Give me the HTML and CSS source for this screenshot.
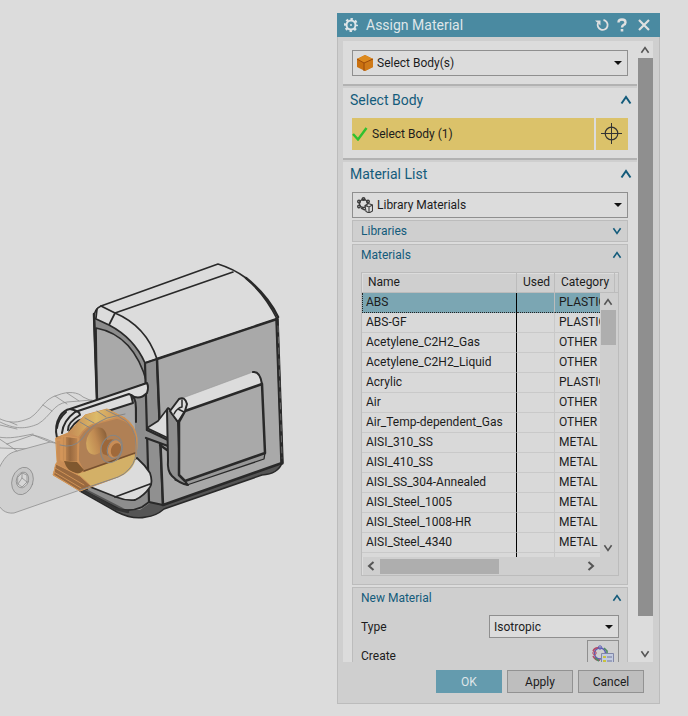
FILE: index.html
```html
<!DOCTYPE html>
<html lang="en">
<head>
<meta charset="utf-8">
<title>Assign Material</title>
<link rel="stylesheet" href="styles.css">
</head>
<body>
<svg class="defs" aria-hidden="true">
  <symbol id="up" viewBox="0 0 12 10"><path d="M1.5 8.5 6 2l4.500 6.500" fill="none" stroke="currentColor" stroke-width="2"/></symbol>
  <symbol id="down" viewBox="0 0 12 10"><path d="M1.500 1.500 6 8l4.500-6.500" fill="none" stroke="currentColor" stroke-width="2"/></symbol>
  <symbol id="caret" viewBox="0 0 8 4"><path d="M0 0h8L4 4z" fill="#111"/></symbol>
</svg>
<main class="app">
  <section class="stage" aria-label="Model view">
    <svg class="model" viewBox="0 0 337 716" preserveAspectRatio="xMinYMin meet">
      <defs>
        <linearGradient id="hole" x1="1" y1="0" x2="0" y2="1"><stop offset="0" stop-color="#76502f"/><stop offset=".5" stop-color="#c08a52"/><stop offset="1" stop-color="#dcb768"/></linearGradient>
        <linearGradient id="rim" x1="0" y1="0" x2="1" y2="0"><stop offset="0" stop-color="#c48a55"/><stop offset=".5" stop-color="#dcba68"/><stop offset="1" stop-color="#c88b55"/></linearGradient>
        <linearGradient id="side" x1="0" y1="0" x2="1" y2="0"><stop offset="0" stop-color="#d09458"/><stop offset=".5" stop-color="#99693f"/><stop offset="1" stop-color="#bd8551"/></linearGradient>
      </defs>
      <g stroke-linejoin="round" stroke-linecap="round">
        <g fill="#d6d6d6" stroke="#8e8e8e" stroke-width=".8">
          <path d="M-2 418C10 424 18 423 30 418C42 410 43 399 58 395C68 391 78 392 83 397L92 401V430L60 450L0 448Z" fill="#dadada"/>
          <path d="M-2 421C15 430 26 429 38 424C51 416 53 404 67 402L92 400M43 405l9 6M55 396l12 8M67 393l12 8M-2 437C10 439 18 437 33 434M0 425l17 4M10 422l7 3" fill="none"/>
          <path d="M-2 470C4 458 8 453 17 451L50 442C60 444 66 446 80 441L88 425L100 480L80 490L14 513C5 514 0 509-3 502Z" fill="#d0d0d0"/>
          <path d="M7 444L33 435C46 438 54 443 64 446C78 448 86 434 94 424M33 435l17 7M7 444l10 7M-2 438l9 6" fill="none"/>
          <ellipse cx="22.500" cy="481" rx="10.500" ry="14" transform="rotate(18 22.500 481)" fill="#c6c6c6"/>
          <ellipse cx="22.500" cy="480" rx="6" ry="8" transform="rotate(18 22.500 480)"/>
          <path d="M18 477l4-4 5 2v7l-5 5-4-3zM22 473v5l-4 6M22 478l5 4" fill="none"/>
        </g>
        <path d="M80 491L117 512Q133 520 146 517Q156 516 164 509L262 475Q278 474 282 463L163 499L100 485Z" fill="#555" stroke="#292929" stroke-width="1.500"/>
        <path d="M94 318Q94 309 101 306L218 264Q234 269 246 278Q266 296 277 319L157 359L145 363Z" fill="#dcdcdc" stroke="#292929" stroke-width="1.600"/>
        <path d="M115 313L233 272M115 313L109 325M97 309l-1 9M101 306l14 7Q146 326 157 359" fill="none" stroke="#292929" stroke-width="1.700"/>
        <path d="M246 278Q268 296 278 317" fill="none" stroke="#292929" stroke-width="2.500"/>
        <path d="M94 318L109 325Q134 338 145 363L148 390L128 400L97 401Z" fill="#8c8c8c" stroke="#292929" stroke-width="1.800"/>
        <path d="M96 328Q134 335 147 383L97 401Z" fill="#a9a9a9" stroke="#292929" stroke-width="1.700"/>
        <path d="M94 314L97 401" stroke="#292929" stroke-width="2.500"/>
        <path d="M133 397L146 385L150 503L140 510L125 509L88 490L90 420Z" fill="#8d8d8d"/>
        <path d="M80 414L134 397L136 465L84 486Z" fill="#aaa"/>
        <path d="M145 363L157 359L163 505L149 502Z" fill="#909090" stroke="#292929" stroke-width="2.200"/>
        <path d="M157 359L277 319L282 463L163 505Z" fill="#a9a9a9" stroke="#292929" stroke-width="2.500"/>
        <path d="M277 319L282 463" stroke="#292929" stroke-width="3.500"/>
        <path d="M278 326L282 458" stroke="#777" stroke-width=".8" stroke-dasharray="6 5"/>
        <path d="M57 438Q54 426 60 416Q64 410 70 409L147 383Q149 387 147 393Q139 401 131 395L133 403L83 419Q73 421 68 435Z" fill="#dcdcdc" stroke="#292929" stroke-width="2"/>
        <path d="M70 409Q80 411 80 415M75 412L129 394Q136 396 136 408V422M62 433Q63 421 75 412M68 430Q67 423 80 415M57 428Q58 419 66 412" fill="none" stroke="#292929" stroke-width="2"/>
        <path d="M137 458Q145 465 150 473Q153 482 150 487Q144 496 135 500Q126 501 116 497L88 486Z" fill="#dcdcdc" stroke="#292929" stroke-width="1.800"/>
        <path d="M115 497L150 484M82 490L119 509Q131 512 142 507L149 502" fill="none" stroke="#292929" stroke-width="1.800"/>
        <path d="M84 491l32 18 12 3" fill="none" stroke="#333" stroke-width="2.500"/>
        <path d="M145 430L168 440V447L145 438Z" fill="#909090"/>
        <path d="M147 428L158 421L168 408V438Z" fill="#dcdcdc" stroke="#292929" stroke-width="1.600"/>
        <path d="M146 438L168 446M147 430L168 440M160 445l7 5" fill="none" stroke="#292929" stroke-width="2.300"/>
        <path d="M180 480L265 453L264 459L187 485L175 480Z" fill="#979797" stroke="#292929" stroke-width="1.300"/>
        <path d="M167 410Q169 406 172 413L178 422L180 475L188 485Q180 484 172 476Q167 471 168 460Z" fill="#8f8f8f" stroke="#292929" stroke-width="2"/>
        <path d="M180 399L253 372Q260 371 262 384L185 411Z" fill="#dcdcdc" stroke="#999" stroke-width=".6"/>
        <path d="M253 372Q260 371 262 384" fill="none" stroke="#292929" stroke-width="2"/>
        <path d="M179 422L185 411L262 384L265 453L185 481L179 475Z" fill="#a9a9a9" stroke="#292929" stroke-width="2.500"/>
        <path d="M170 411L179 399Q185 396 187 404L185 411L178 422L172 414Z" fill="#dcdcdc" stroke="#292929" stroke-width="2"/>
        <path d="M174 414Q177 408 182 407V400M178 409l6 3" fill="none" stroke="#292929" stroke-width="1.500"/>
        <path d="M56 438L68 433L85 415L107 409L125 418Q135 425 137 438Q138 459 130 468Q125 475 118 477L80 491L53 475L57 462Z" fill="#c98d56" stroke="#d4944f" stroke-width="1"/>
        <path d="M68 433L85 415L107 409L125 418L117 419L94 426L79 437Z" fill="url(#rim)"/>
        <path d="M79 437Q86 425 98 423L117 418Q135 422 136 440V453L84 472L78 460Z" fill="#b08055" stroke="#c98d56" stroke-width="1.500"/>
        <path d="M84 472L134 454L136 458Q133 472 118 477L91 486L73 475Z" fill="#d3b067"/>
        <path d="M62 436L78 438V462L62 461Z" fill="url(#side)" stroke="#d4975a" stroke-width="1.200"/>
        <path d="M57 440h4v20M65 437v24" fill="none" stroke="#d4975a" stroke-width="1.500"/>
        <path d="M64 461Q68 475 80 473L84 470Q77 462 77 462Z" fill="#80582f"/>
        <path d="M56 464L80 476L91 486L80 491L54 475Z" fill="#99693f" stroke="#d4975a" stroke-width="1"/>
        <path d="M55 468l29 17M54 472l27 16" fill="none" stroke="#cf9256" stroke-width="1"/>
        <path d="M84 471L135 453" fill="none" stroke="#76502f" stroke-width="1.500"/>
        <ellipse cx="96.500" cy="441" rx="10" ry="14" transform="rotate(18 96.500 441)" fill="url(#hole)"/>
        <path d="M103 442Q111 437 116 441L120 452L114 458L103 454Q100 448 103 442Z" fill="#9c673a"/>
        <ellipse cx="115" cy="449" rx="7" ry="9.500" transform="rotate(18 115 449)" fill="#c98d56"/>
        <ellipse cx="116" cy="450" rx="5" ry="7" transform="rotate(18 116 450)" fill="#a0693a"/>
        <g fill="none" stroke="#858585" stroke-width="1">
          <ellipse cx="111.500" cy="449" rx="10.500" ry="14" transform="rotate(18 111.500 449)"/>
          <ellipse cx="114.500" cy="449" rx="7" ry="9.500" transform="rotate(18 114.500 449)"/>
          <path d="M60 445Q73 449 82 439Q90 425 107 418L125 414M85 418l9 5M97 411l9 6M106 410l12 6Q137 425 136 446Q137 460 130 468Q124 475 118 477L80 490M80 422l10 6"/>
        </g>
      </g>
    </svg>
  </section>

  <section class="dialog" role="dialog" aria-labelledby="dialog-title">
    <header class="titlebar">
      <svg class="gear" viewBox="0 0 14 14"><circle cx="7" cy="7" r="4.500" fill="none" stroke="#dfe6e9" stroke-width="2"/><circle cx="7" cy="7" r="6" fill="none" stroke="#dfe6e9" stroke-width="2" stroke-dasharray="2.400 2.312" stroke-dashoffset="1.200"/><circle cx="7" cy="7" r="1" fill="#dfe6e9"/></svg>
      <h1 id="dialog-title">Assign Material</h1>
      <button type="button" aria-label="Reset"><svg width="14" height="14" viewBox="0 0 14 14"><path d="M8.500 2A5 5 0 1 1 3 5" fill="none" stroke="#e0e0e0" stroke-width="1.800"/><path d="M0 2.500h5.500v5z" fill="#e0e0e0"/></svg></button>
      <button type="button" aria-label="Help"><svg width="10" height="14" viewBox="0 0 10 14"><path d="M1.500 4.500Q1.500 1.500 5 1.500T8.500 4.500Q8.500 6 6.500 7Q5 8 5 9.500" fill="none" stroke="#e0e0e0" stroke-width="2.400"/><path d="M3.700 11h2.600v2.500H3.700z" fill="#e0e0e0"/></svg></button>
      <button type="button" class="close" aria-label="Close"><svg width="12" height="12" viewBox="0 0 12 12"><path d="M1 1l10 10M11 1L1 11" stroke="#e0e0e0" stroke-width="2.200"/></svg></button>
    </header>

    <div class="viewport">
      <div class="groups">
        <section class="group first">
          <div class="combo">
            <svg class="icon" viewBox="0 0 16 16"><path d="M8 0l8 4v8l-8 4-8-4V4z" fill="#c9700f"/><path d="M8 0l8 4-9 4-7-4z" fill="#dd8a1e"/><path d="M7 8l9-4v8l-8 4z" fill="#cf7a18"/><path d="M0 4l7 4 9-4M7 8v8" fill="none" stroke="#9c4a0a" stroke-width="1"/></svg>
            <select aria-label="Filter"><option>Select Body(s)</option></select>
            <svg class="caret"><use href="#caret"/></svg>
          </div>
        </section>

        <section class="group">
          <h2>Select Body <svg class="fold"><use href="#up"/></svg></h2>
          <div class="pick">
            <button type="button" class="pick-main"><svg width="16" height="14" viewBox="0 0 16 14"><path d="M1 7l5 5.500L14.500 1" fill="none" stroke="#2fc12f" stroke-width="2.400"/></svg>Select Body (1)</button>
            <button type="button" class="pick-target" aria-label="Pick point"><svg width="22" height="22" viewBox="0 0 22 22"><circle cx="10.500" cy="10.500" r="6.300" fill="none" stroke="#333" stroke-width="1.200"/><path d="M10.500 0v21M0 10.500h21" stroke="#333" stroke-width="1"/></svg></button>
          </div>
        </section>

        <section class="group">
          <h2>Material List <svg class="fold"><use href="#up"/></svg></h2>
          <div class="combo">
            <svg class="icon" viewBox="0 0 16 16" fill="none" stroke="#3d3d3d" stroke-width="1.400"><circle cx="6.500" cy="6.500" r="4"/><circle cx="6.500" cy="2" r="1.300"/><circle cx="2" cy="4.500" r="1.300"/><circle cx="2" cy="9.500" r="1.300"/><circle cx="11" cy="4.500" r="1.300"/><path d="M4 11l4 2"/><path d="M8 8.500l3.500-2 4 1.500v6L12 16l-3-1.500zM8 8.500l4 1.500 3.500-2M12 10v6" fill="#dcdcdc" stroke-width="1.100"/></svg>
            <select aria-label="Material list"><option>Library Materials</option></select>
            <svg class="caret"><use href="#caret"/></svg>
          </div>

          <section class="sub">
            <h3>Libraries <svg class="fold-small"><use href="#down"/></svg></h3>
          </section>

          <section class="sub materials">
            <h3>Materials <svg class="fold-small"><use href="#up"/></svg></h3>
            <div class="grid">
              <div class="grid-view">
                <table>
                  <thead><tr><th class="name">Name</th><th class="used">Used</th><th class="category">Category</th><th></th></tr></thead>
                  <tbody>
                    <tr class="selected"><td>ABS</td><td></td><td colspan="2">PLASTIC</td></tr>
                    <tr><td>ABS-GF</td><td></td><td colspan="2">PLASTIC</td></tr>
                    <tr><td>Acetylene_C2H2_Gas</td><td></td><td colspan="2">OTHER</td></tr>
                    <tr><td>Acetylene_C2H2_Liquid</td><td></td><td colspan="2">OTHER</td></tr>
                    <tr><td>Acrylic</td><td></td><td colspan="2">PLASTIC</td></tr>
                    <tr><td>Air</td><td></td><td colspan="2">OTHER</td></tr>
                    <tr><td>Air_Temp-dependent_Gas</td><td></td><td colspan="2">OTHER</td></tr>
                    <tr><td>AISI_310_SS</td><td></td><td colspan="2">METAL</td></tr>
                    <tr><td>AISI_410_SS</td><td></td><td colspan="2">METAL</td></tr>
                    <tr><td>AISI_SS_304-Annealed</td><td></td><td colspan="2">METAL</td></tr>
                    <tr><td>AISI_Steel_1005</td><td></td><td colspan="2">METAL</td></tr>
                    <tr><td>AISI_Steel_1008-HR</td><td></td><td colspan="2">METAL</td></tr>
                    <tr><td>AISI_Steel_4340</td><td></td><td colspan="2">METAL</td></tr>
                    <tr class="filler"><td></td><td></td><td colspan="2"></td></tr>
                  </tbody>
                </table>
                <div class="vbar">
                  <svg class="arrow"><use href="#up"/></svg>
                  <span class="thumb"></span>
                  <svg class="arrow"><use href="#down"/></svg>
                </div>
              </div>
              <div class="hbar">
                <svg class="side-arrow" viewBox="0 0 8 10"><path d="M6.500 1L2 5l4.500 4" fill="none" stroke="currentColor" stroke-width="2"/></svg>
                <span class="track"><span class="thumb"></span></span>
                <svg class="side-arrow" viewBox="0 0 8 10"><path d="M1.500 1L6 5 1.500 9" fill="none" stroke="currentColor" stroke-width="2"/></svg>
              </div>
            </div>
          </section>

          <section class="sub new-material">
            <h3>New Material <svg class="fold-small"><use href="#up"/></svg></h3>
            <div class="field">
              <label for="type">Type</label>
              <div class="combo small">
                <select id="type"><option>Isotropic</option></select>
                <svg class="caret"><use href="#caret"/></svg>
              </div>
            </div>
            <div class="field create">
              <label for="create">Create</label>
              <button type="button" id="create"><svg width="22" height="22" viewBox="0 0 22 22" fill="none"><circle cx="8" cy="8.500" r="5.500" stroke="#5b5bb8" stroke-width="1.400"/><path d="M1 6q2-4 6-3M1 11q3 5 7 4" stroke="#b54a66" stroke-width="1.600"/><path d="M12 3l3 3v3M3 13l4 3" stroke="#4f8a62" stroke-width="1.600"/><circle cx="8" cy="2.500" r="1.700" stroke="#5b5bb8"/><circle cx="2.500" cy="8" r="1.700" stroke="#b54a66"/><path d="M9.500 8.500h12v13h-12z" fill="#c3cbe0" stroke="#8187a8"/><path d="M11 12h3M11 16h3" stroke="#c9c23c" stroke-width="2"/><path d="M15 12h5M15 16h5" stroke="#70769a"/></svg></button>
            </div>
          </section>
        </section>
      </div>
      <div class="scrollbar">
        <svg class="arrow"><use href="#up"/></svg>
        <span class="thumb"></span>
        <svg class="arrow"><use href="#down"/></svg>
      </div>
    </div>

    <footer class="actions">
      <button type="button" class="primary">OK</button>
      <button type="button">Apply</button>
      <button type="button">Cancel</button>
    </footer>
  </section>
</main>
</body>
</html>
```

FILE: styles.css
```css
* { box-sizing: border-box; }
body {
  margin: 0;
  background: #dcdcdc;
  color: #1c1c1c;
  font: 12px/20px Roboto, "Noto Sans CJK KR", sans-serif;
}
svg { display: block; flex: none; }
button, select { font: inherit; color: inherit; }
button { padding: 0; border: 0; background: none; }
h1, h2, h3 { margin: 0; font-weight: 400; }
.defs { width: 0; height: 0; position: absolute; }

.app {
  display: grid;
  grid-template-columns: minmax(0, 337fr) minmax(0, 323fr);
  height: 100vh;
  padding-right: 28px;
}
.stage { overflow: hidden; }
.model { width: 100%; }

.dialog {
  display: flex;
  flex-direction: column;
  min-height: 0;
  margin: 13px 0 12px;
  border: 1px solid #bcbcbc;
  border-width: 0 1px 1px;
  background: #cfcfcf;
}
.titlebar {
  display: flex;
  align-items: center;
  flex: none;
  height: 24px;
  margin: 0 -1px;
  padding: 0 10px 0 7px;
  gap: 8px;
  background: #4a8aa1;
  color: #dfe6e9;
}
.titlebar h1 { flex: 1; font-size: 14px; line-height: 24px; }
.gear { width: 14px; height: 14px; }
.close { margin-left: 3px; }

.viewport {
  display: flex;
  flex: 1;
  min-height: 0;
  margin: 4px 6px 0 5px;
  overflow: hidden;
}
.groups { flex: 1; min-width: 0; overflow: hidden; background: #dcdcdc; }
.group {
  padding: 0 9px 8px;
  border-bottom: 2px solid #b2b2b2;
  box-shadow: 0 2px #cfcfcf;
  margin-bottom: 2px;
}
.group.first { padding-top: 9px; }
.group h2 {
  display: flex;
  align-items: center;
  justify-content: space-between;
  height: 30px;
  margin: 0 -4px 0 -2px;
  padding-bottom: 6px;
  color: #135b7b;
  font-size: 14px;
}
.fold { width: 12px; height: 10px; }
.fold-small { width: 10px; height: 8px; }

.combo {
  display: flex;
  align-items: center;
  height: 26px;
  padding: 0 5px 0 4px;
  border: 1px solid #8f8f8f;
  background: #dcdcdc;
}
.combo .icon { width: 16px; height: 16px; margin-right: 4px; }
.combo select {
  flex: 1;
  min-width: 0;
  padding: 0;
  border: 0;
  background: none;
  appearance: none;
}
.caret { width: 8px; height: 4px; }

.pick { display: flex; gap: 2px; height: 32px; }
.pick button { background: #dbc26a; }
.pick-main { display: flex; flex: 1; align-items: center; gap: 4px; }
.pick-target { display: grid; width: 32px; place-items: center; }

.sub { margin-top: 2px; padding: 0 8px; border: 1px solid #bcbcbc; background: #cfcfcf; }
.sub h3 {
  display: flex;
  align-items: center;
  justify-content: space-between;
  height: 20px;
  margin-right: -3px;
  color: #135b7b;
  font-size: 12px;
}
.materials { padding-bottom: 8px; }
.grid { margin-top: 7px; border: 1px solid #bcbcbc; box-shadow: inset 1px 1px #dcdcdc; }
.grid-view { position: relative; overflow: hidden; }
table { width: 100%; border-collapse: separate; border-spacing: 0; table-layout: fixed; }
th { height: 20px; padding: 0 0 0 6px; border-right: 1px solid #bcbcbc; border-bottom: 1px solid #bcbcbc; font-weight: 400; line-height: 19px; text-align: left; }
th.name { width: 155px; }
th.used { width: 38px; }
th.category { width: 60px; }
th:last-child { border-right: 0; padding: 0; }
td { height: 20px; padding: 0 0 0 4px; border-bottom: 1px solid #c9c9c9; background: #d9d9d9; line-height: 19px; white-space: nowrap; overflow: hidden; }
td:nth-child(1) { border-right: 1px solid #000; }
td:nth-child(2) { border-right: 1px solid #c9c9c9; }
.selected td { border-bottom: 1px dotted #222; border-right-color: #bcbcbc; background: #7ba6b3; }
.selected td:first-child { border-left: 1px dotted #222; border-right-color: #000; padding-left: 3px; }
.filler td { height: 4px; border-bottom: 0; }
.vbar {
  position: absolute;
  top: 20px;
  right: 0;
  bottom: 0;
  display: flex;
  flex-direction: column;
  align-items: center;
  width: 18px;
  padding: 5px 2px 5px 0;
  background: #cfcfcf;
  color: #555;
}
.vbar .thumb { width: 15px; height: 35px; margin-top: 4px; margin-bottom: auto; background: #aeaeae; }
.arrow { width: 10px; height: 8px; }
.hbar { display: flex; align-items: center; height: 18px; padding: 0 23px 0 5px; gap: 5px; color: #555; }
.side-arrow { width: 8px; height: 10px; }
.track { display: flex; flex: 1; height: 15px; }
.track .thumb { width: 59%; background: #aeaeae; }

.field { display: flex; align-items: center; justify-content: space-between; }
.field label { line-height: 12px; }
.new-material .field { margin-top: 7px; height: 23px; }
.combo.small { width: 130px; height: 23px; }
.new-material .create { height: 32px; margin-top: 2px; }
.create button { display: grid; place-items: center; width: 32px; height: 32px; border: 1px solid #8f8f8f; }

.scrollbar {
  display: flex;
  flex-direction: column;
  align-items: center;
  flex: none;
  width: 16px;
  padding: 5px 0 4px;
  background: #dcdcdc;
  color: #555;
}
.scrollbar .thumb { flex: 1; width: 15px; margin: 4px 0 34px; background: #8f8f8f; }

.actions { display: flex; justify-content: flex-end; flex: none; gap: 5px; padding: 8px 15px 10px; }
.actions button { width: 66px; height: 23px; border: 1px solid #929292; background: #bebebe; }
.actions .primary { border-color: #649bae; background: #649bae; color: #dfe6e9; }
```
